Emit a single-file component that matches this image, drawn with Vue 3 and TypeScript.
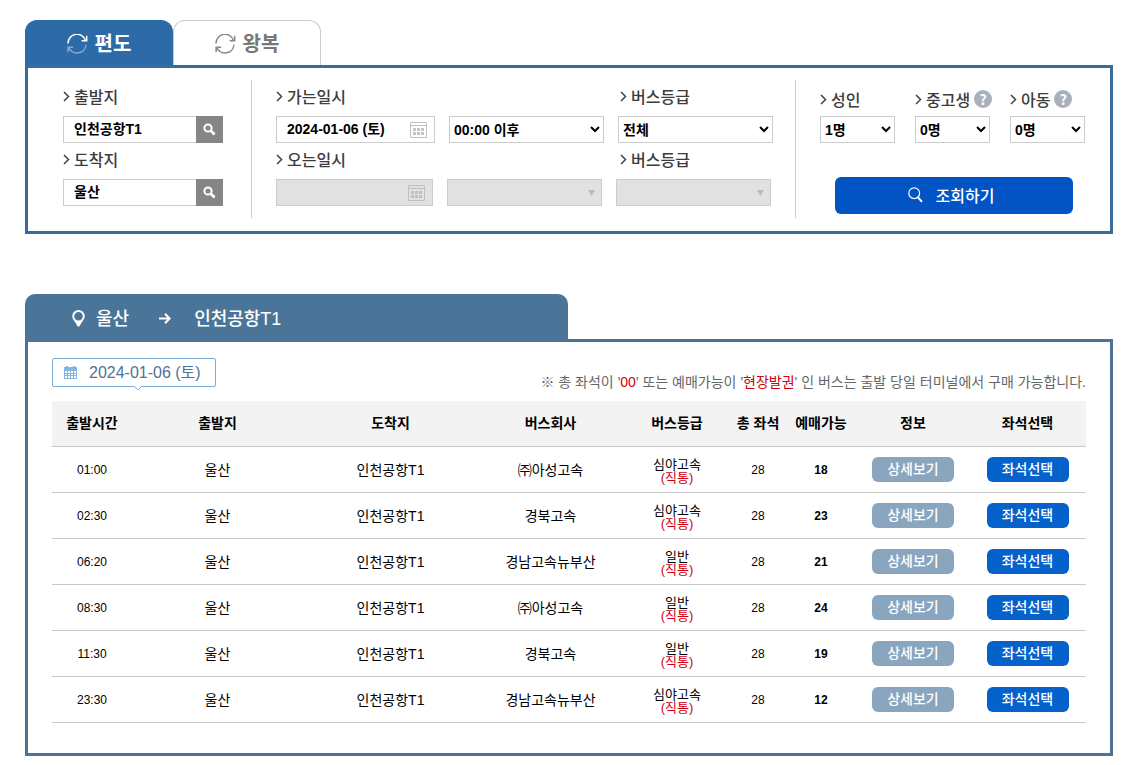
<script setup lang="ts">
import { ref } from 'vue'

interface Trip {
  time: string
  from: string
  to: string
  company: string
  grade: string
  seats: number
  available: number
}

const departure = ref('인천공항T1')
const arrival = ref('울산')
const goDate = ref('2024-01-06 (토)')

const passengers = [
  { id: 'adult', label: '성인', value: '1명', help: false },
  { id: 'student', label: '중고생', value: '0명', help: true },
  { id: 'child', label: '아동', value: '0명', help: true },
]

const headers = ['출발시간', '출발지', '도착지', '버스회사', '버스등급', '총 좌석', '예매가능', '정보', '좌석선택']

const trips: Trip[] = [
  { time: '01:00', from: '울산', to: '인천공항T1', company: '㈜아성고속', grade: '심야고속', seats: 28, available: 18 },
  { time: '02:30', from: '울산', to: '인천공항T1', company: '경북고속', grade: '심야고속', seats: 28, available: 23 },
  { time: '06:20', from: '울산', to: '인천공항T1', company: '경남고속뉴부산', grade: '일반', seats: 28, available: 21 },
  { time: '08:30', from: '울산', to: '인천공항T1', company: '㈜아성고속', grade: '일반', seats: 28, available: 24 },
  { time: '11:30', from: '울산', to: '인천공항T1', company: '경북고속', grade: '일반', seats: 28, available: 19 },
  { time: '23:30', from: '울산', to: '인천공항T1', company: '경남고속뉴부산', grade: '심야고속', seats: 28, available: 12 },
]
</script>

<template>
  <main class="page">
    <section class="search">
      <div class="tabs">
        <button type="button" class="tab active">
          <svg class="cycle" viewBox="0 0 21 20" fill="none" stroke-width="1.5">
            <path d="M1 9.4A9 9 0 0 1 18.6 6.6M19.7 1.7V6.8H14.6" stroke="#fff" />
            <path d="M19 10.8A9 9 0 0 1 1.8 13.6M6.2 13.2H1.1V18.3" stroke="#83a9d0" />
          </svg>
          <span>편도</span>
        </button>
        <button type="button" class="tab">
          <svg class="cycle" viewBox="0 0 21 20" fill="none" stroke="#8a8a8a" stroke-width="1.5">
            <path d="M1 9.4A9 9 0 0 1 18.6 6.6M19.7 1.7V6.8H14.6" />
            <path d="M19 10.8A9 9 0 0 1 1.8 13.6M6.2 13.2H1.1V18.3" />
          </svg>
          <span>왕복</span>
        </button>
      </div>

      <form class="search-box" @submit.prevent>
        <div class="group places">
          <label class="caption" for="departure">
            <svg class="chevron" viewBox="0 0 7 11"><path d="M1 1l4.5 4.5L1 10" /></svg>출발지
          </label>
          <div class="field">
            <input id="departure" v-model="departure" type="text" />
            <button type="button" class="find" aria-label="출발지 검색">
              <svg viewBox="0 0 13 13" fill="none" stroke="#fff">
                <circle cx="5" cy="5" r="3.6" stroke-width="2" /><path d="M7.6 7.6l4 4" stroke-width="2.8" />
              </svg>
            </button>
          </div>
          <label class="caption" for="arrival">
            <svg class="chevron" viewBox="0 0 7 11"><path d="M1 1l4.5 4.5L1 10" /></svg>도착지
          </label>
          <div class="field">
            <input id="arrival" v-model="arrival" type="text" />
            <button type="button" class="find" aria-label="도착지 검색">
              <svg viewBox="0 0 13 13" fill="none" stroke="#fff">
                <circle cx="5" cy="5" r="3.6" stroke-width="2" /><path d="M7.6 7.6l4 4" stroke-width="2.8" />
              </svg>
            </button>
          </div>
        </div>

        <div class="group schedule">
          <div class="line">
            <div class="cell wide">
              <label class="caption" for="go-date">
                <svg class="chevron" viewBox="0 0 7 11"><path d="M1 1l4.5 4.5L1 10" /></svg>가는일시
              </label>
              <div class="field">
                <input id="go-date" v-model="goDate" type="text" />
                <button type="button" class="calendar" aria-label="가는 날짜 선택">
                  <svg viewBox="0 0 17 16">
                    <path d="M.5.5h16v15H.5zM.5 3.5h16" fill="none" stroke="#c0c0c0" />
                    <path d="M3 6h3v3H3zM7 6h3v3H7zM11 6h3v3h-3zM3 10h3v3H3zM7 10h3v3H7zM11 10h3v3h-3z" fill="#c4c4c4" />
                  </svg>
                </button>
              </div>
            </div>
            <div class="cell">
              <div class="caption"></div>
              <select aria-label="가는 시간"><option>00:00 이후</option></select>
            </div>
            <div class="cell">
              <label class="caption grade-caption" for="go-grade">
                <svg class="chevron" viewBox="0 0 7 11"><path d="M1 1l4.5 4.5L1 10" /></svg>버스등급
              </label>
              <select id="go-grade"><option>전체</option></select>
            </div>
          </div>
          <div class="line back">
            <div class="cell wide">
              <label class="caption" for="back-date">
                <svg class="chevron" viewBox="0 0 7 11"><path d="M1 1l4.5 4.5L1 10" /></svg>오는일시
              </label>
              <div class="field off">
                <input id="back-date" type="text" disabled />
                <button type="button" class="calendar" aria-label="오는 날짜 선택" disabled>
                  <svg viewBox="0 0 17 16">
                    <path d="M.5.5h16v15H.5zM.5 3.5h16" fill="none" stroke="#c0c0c0" />
                    <path d="M3 6h3v3H3zM7 6h3v3H7zM11 6h3v3h-3zM3 10h3v3H3zM7 10h3v3H7zM11 10h3v3h-3z" fill="#c0c0c0" />
                  </svg>
                </button>
              </div>
            </div>
            <div class="cell">
              <div class="caption"></div>
              <div class="select-off">
                <select aria-label="오는 시간" disabled></select>
                <svg viewBox="0 0 7 6"><path d="M0 0h7L3.5 6z" fill="#bbb" /></svg>
              </div>
            </div>
            <div class="cell">
              <label class="caption grade-caption" for="back-grade">
                <svg class="chevron" viewBox="0 0 7 11"><path d="M1 1l4.5 4.5L1 10" /></svg>버스등급
              </label>
              <div class="select-off">
                <select id="back-grade" disabled></select>
                <svg viewBox="0 0 7 6"><path d="M0 0h7L3.5 6z" fill="#bbb" /></svg>
              </div>
            </div>
          </div>
        </div>

        <div class="group people">
          <div class="counts">
            <div v-for="p in passengers" :key="p.id" class="count">
              <div class="caption">
                <svg class="chevron" viewBox="0 0 7 11"><path d="M1 1l4.5 4.5L1 10" /></svg>
                <label :for="p.id">{{ p.label }}</label>
                <button v-if="p.help" type="button" class="help" :aria-label="p.label + ' 안내'">?</button>
              </div>
              <select :id="p.id"><option>{{ p.value }}</option></select>
            </div>
          </div>
          <button type="submit" class="submit">
            <svg viewBox="0 0 15 16" fill="none" stroke="#fff">
              <circle cx="6.2" cy="6.2" r="5.4" stroke-width="1.2" /><path d="M10 10.4l4 4.4" stroke-width="2" />
            </svg>
            <span>조회하기</span>
          </button>
        </div>
      </form>
    </section>

    <section class="results">
      <h2 class="route">
        <svg class="pin" viewBox="0 0 13 17">
          <path d="M6.5 0A6.2 6.2 0 0 0 .3 6.200C.3 8.400 1.600 9.900 3 12L5.700 16.400h1.600L10 12C11.400 9.900 12.700 8.400 12.700 6.200A6.200 6.200 0 0 0 6.500 0zm0 1.900a4.300 4.300 0 1 1 0 8.600 4.300 4.300 0 0 1 0-8.600z" fill="#fff" fill-rule="evenodd" />
        </svg>
        <span>울산</span>
        <svg class="arrow" viewBox="0 0 12 11" fill="none" stroke="#fff" stroke-width="2">
          <path d="M0 5.5h10.5M6 .8l4.6 4.7L6 10.2" />
        </svg>
        <span>인천공항T1</span>
      </h2>
      <div class="results-box">
        <div class="top">
          <div class="day">
            <svg class="day-icon" viewBox="0 0 13 13" fill="#83b6e3">
              <path d="M2 0h2v1h5V0h2v1h2v3H0V1h2z" />
              <path d="M0 4h13v9H0zM1 5v2h2V5zM4 5v2h2V5zM7 5v2h2V5zM10 5v2h2V5zM1 8v1h2V8zM4 8v1h2V8zM7 8v1h2V8zM10 8v1h2V8zM1 10v2h2v-2zM4 10v2h2v-2zM7 10v2h2v-2zM10 10v2h2v-2z" fill-rule="evenodd" />
            </svg>
            <span>2024-01-06 (토)</span>
            <svg class="tip" viewBox="0 0 8 5"><path d="M0 0h8L4 4z" fill="#fff" /><path d="M0 0l4 4 4-4" fill="none" stroke="#78add9" /></svg>
          </div>
          <p class="notice">※ 총 좌석이 '<em>00</em>' 또는 예매가능이 '<em>현장발권</em>' 인 버스는 출발 당일 터미널에서 구매 가능합니다.</p>
        </div>
        <table>
          <colgroup>
            <col class="c-time" /><col class="c-from" /><col class="c-to" /><col class="c-company" /><col class="c-grade" />
            <col class="c-seats" /><col class="c-available" /><col class="c-info" /><col class="c-pick" />
          </colgroup>
          <thead>
            <tr><th v-for="h in headers" :key="h" scope="col">{{ h }}</th></tr>
          </thead>
          <tbody>
            <tr v-for="t in trips" :key="t.time">
              <td class="num">{{ t.time }}</td>
              <td>{{ t.from }}</td>
              <td>{{ t.to }}</td>
              <td>{{ t.company }}</td>
              <td class="grade">{{ t.grade }}<br /><em>(직통)</em></td>
              <td class="num">{{ t.seats }}</td>
              <td class="num"><strong>{{ t.available }}</strong></td>
              <td><button type="button" class="row-button detail">상세보기</button></td>
              <td><button type="button" class="row-button pick">좌석선택</button></td>
            </tr>
          </tbody>
        </table>
      </div>
    </section>
  </main>
</template>

<style>
body {
  margin: 0;
  background: #fff;
}
</style>

<style scoped>
* {
  box-sizing: border-box;
}
.page {
  padding: 20px 16px 9px 25px;
  font-family: "Liberation Sans", "Noto Sans CJK KR", sans-serif;
  font-size: 14px;
  color: #000;
}
button,
input,
select {
  font: inherit;
  margin: 0;
}
button {
  border: 0;
  padding: 0;
  cursor: pointer;
}
svg {
  display: block;
  flex: none;
}
em {
  font-style: normal;
  color: #d0000f;
}

.tabs {
  display: flex;
}
.tab {
  display: flex;
  align-items: center;
  justify-content: center;
  gap: 7px;
  width: 148px;
  height: 45px;
  padding-top: 2px;
  border: 1px solid #ccc;
  border-bottom: 0;
  border-radius: 12px 12px 0 0;
  background: #fff;
  color: #777;
  font-size: 20px;
  line-height: 24px;
  font-weight: bold;
}
.tab.active {
  background: #2d6ba8;
  border-color: #2d6ba8;
  color: #fff;
}
.cycle {
  width: 21px;
  height: 20px;
}

.search-box {
  display: flex;
  padding: 12px 25px 13px 35px;
  border: 3px solid #3a6b9a;
}
.group {
  min-width: 0;
}
.places {
  flex: none;
  width: 189px;
  padding: 0 28px 12px 0;
  border-right: 1px solid #ccc;
}
.schedule {
  flex: 1;
  padding: 0 22px 12px 24px;
  border-right: 1px solid #ccc;
}
.people {
  flex: none;
  padding-left: 24px;
}
.caption {
  display: flex;
  align-items: center;
  gap: 4px;
  height: 36px;
  padding: 5px 0 9px;
  font-family: "Noto Sans CJK KR", sans-serif;
  font-size: 16px;
  line-height: 22px;
  font-weight: 500;
  color: #3c3c3c;
}
.grade-caption {
  padding-left: 2px;
}
.chevron {
  width: 7px;
  height: 11px;
  fill: none;
  stroke: #444;
  stroke-width: 1.5;
}
.field {
  display: flex;
  height: 27px;
  border: 1px solid #ccc;
  background: #fff;
}
.field input {
  flex: 1;
  min-width: 0;
  width: 0;
  padding: 0 0 3px 10px;
  border: 0;
  background: transparent;
  font-weight: bold;
  color: #000;
}
.find {
  display: grid;
  place-items: center;
  width: 27px;
  margin: -1px;
  background: #868686;
}
.find svg {
  width: 13px;
  height: 13px;
}
.calendar {
  display: grid;
  place-items: center;
  width: 31px;
  background: transparent;
}
.calendar svg {
  width: 17px;
  height: 16px;
}
.line {
  display: flex;
  gap: 14px;
}
.line.back {
  padding-right: 2px;
}
.cell {
  flex: 155 1 0;
  min-width: 0;
}
.cell.wide {
  flex-grow: 159;
}
.back .cell.wide {
  flex-grow: 157;
}
.back .grade-caption {
  padding-left: 4px;
}
select {
  display: block;
  width: 100%;
  height: 27px;
  border: 1px solid #ccc;
  border-radius: 0;
  background-color: #fff;
  color: #000;
  font-weight: bold;
}
.field.off,
.select-off select {
  background: #e1e1e1;
}
.select-off {
  display: grid;
  align-items: center;
}
.select-off select {
  grid-area: 1 / 1;
  appearance: none;
  opacity: 1;
}
.select-off svg {
  grid-area: 1 / 1;
  justify-self: end;
  width: 7px;
  height: 6px;
  margin-right: 7px;
  pointer-events: none;
}

.counts {
  display: flex;
  gap: 20px;
}
.count {
  width: 75px;
}
.count .caption {
  padding: 8px 0 6px;
  white-space: nowrap;
}
.help {
  flex: none;
  width: 18px;
  height: 18px;
  border-radius: 9px;
  background: #a9b1ba;
  color: #fff;
  font-family: "Noto Sans CJK KR", sans-serif;
  font-size: 14px;
  line-height: 18px;
  font-weight: bold;
}
.submit {
  display: flex;
  align-items: center;
  justify-content: center;
  gap: 13px;
  width: 238px;
  height: 37px;
  margin: 34px 12px 0 15px;
  padding: 0 6px 2px 0;
  border-radius: 6px;
  background: #0254c4;
  color: #fff;
  font-size: 16px;
  font-weight: 500;
}
.submit svg {
  width: 15px;
  height: 16px;
}

.results {
  margin-top: 60px;
}
.route {
  display: flex;
  align-items: center;
  width: calc(50% - 1px);
  height: 45px;
  margin: 0;
  padding: 4px 0 0 47px;
  border-radius: 10px 10px 0 0;
  background: #4a7599;
  color: #fff;
  font-size: 18px;
  line-height: 24px;
  font-weight: 500;
}
.pin {
  width: 13px;
  height: 17px;
  margin-right: 11px;
}
.arrow {
  width: 12px;
  height: 11px;
  margin: 0 23px 0 30px;
}
.results-box {
  padding: 16px 24px 30px;
  border: 3px solid #4f7393;
}
.top {
  display: flex;
  justify-content: space-between;
  height: 43px;
}
.day {
  position: relative;
  display: flex;
  align-items: center;
  gap: 12px;
  height: 29px;
  padding: 0 14px 0 11px;
  border: 1px solid #78add9;
  border-radius: 2px;
  color: #4f7393;
  font-size: 16px;
  line-height: 24px;
  white-space: nowrap;
}
.day-icon {
  width: 13px;
  height: 13px;
}
.tip {
  position: absolute;
  left: 50%;
  top: 100%;
  width: 8px;
  height: 5px;
}
.notice {
  margin: 14px 0 0;
  color: #666;
  line-height: 20px;
  white-space: nowrap;
}

table {
  width: 100%;
  table-layout: fixed;
  border-collapse: separate;
  border-spacing: 0;
  text-align: center;
}
.c-time { width: 80px; }
.c-from { width: 171px; }
.c-to { width: 175px; }
.c-company { width: 145px; }
.c-grade { width: 108px; }
.c-seats { width: 54px; }
.c-available { width: 72px; }
.c-info { width: 112px; }
.c-pick { width: 117px; }
th,
td {
  height: 46px;
  padding: 0;
  border-bottom: 1px solid #c8c8c8;
  line-height: 20px;
  white-space: nowrap;
}
th {
  padding-bottom: 2px;
  background: #f3f3f3;
  font-weight: bold;
}
.num {
  font-size: 12px;
}
.grade {
  padding-top: 2px;
  font-size: 13px;
  line-height: 13px;
}
.row-button {
  display: block;
  width: 82px;
  height: 25px;
  margin: 0 auto;
  border-radius: 6px;
  color: #fff;
  line-height: 25px;
  font-weight: 500;
}
.detail {
  background: #8aa6bf;
}
.pick {
  background: #0562cb;
}
</style>
